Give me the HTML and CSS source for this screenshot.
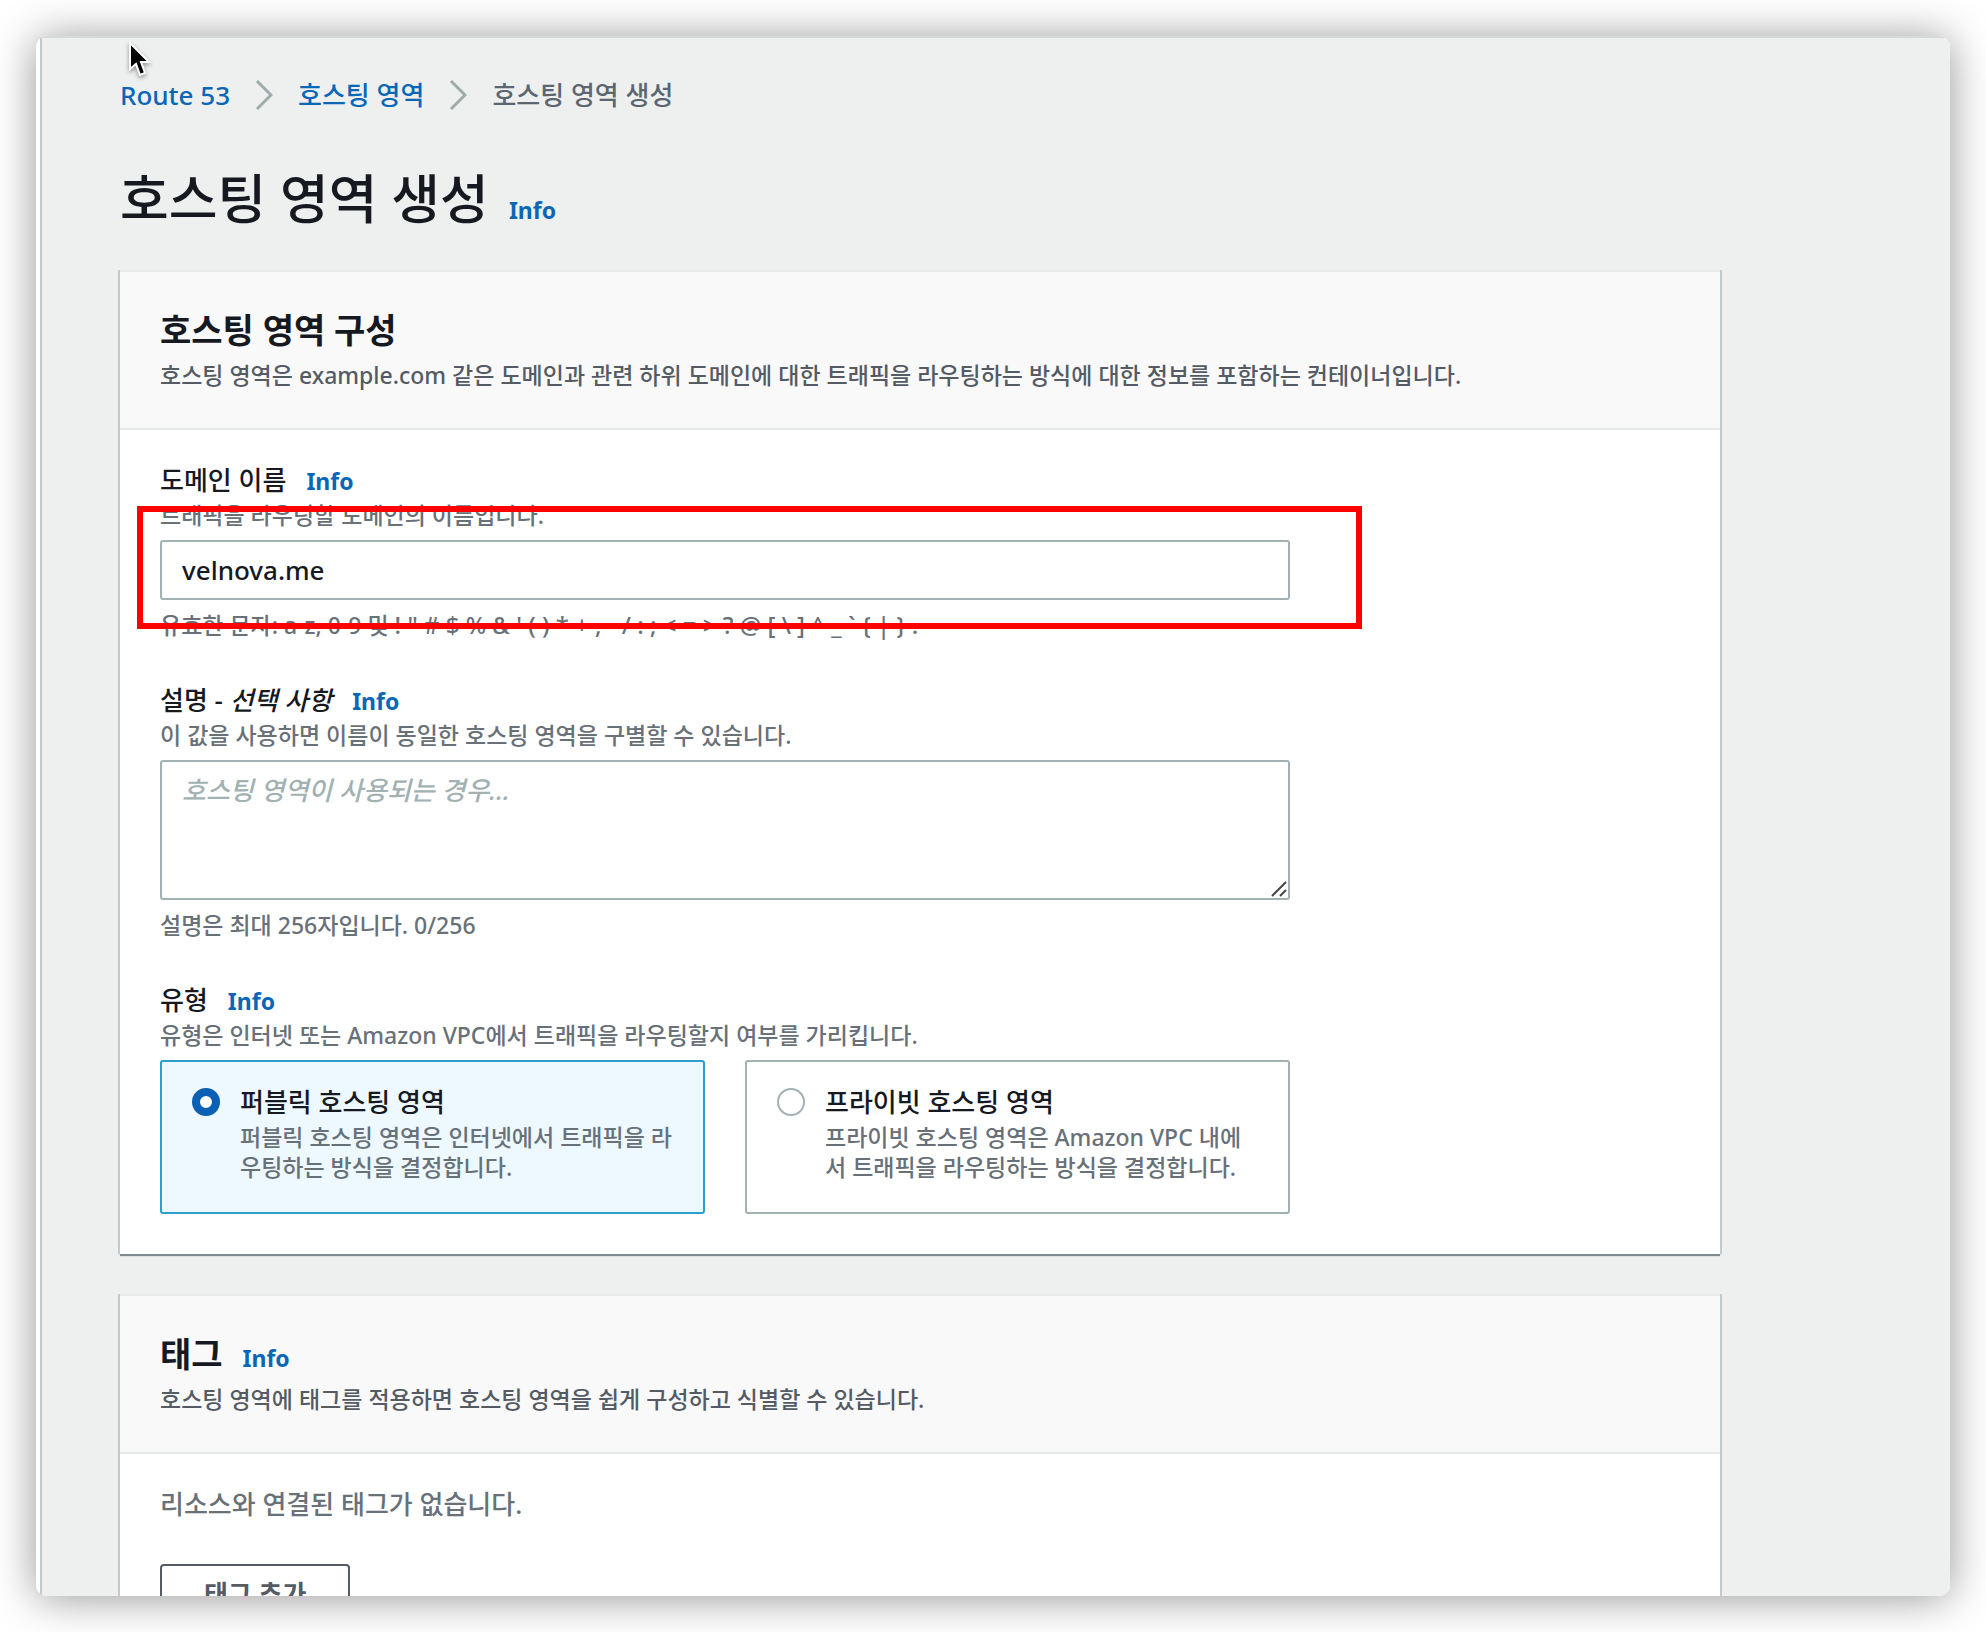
FILE: index.html
```
<!DOCTYPE html>
<html lang="ko">
<head>
  <meta charset="utf-8">
  <title>호스팅 영역 생성</title>
  <link rel="stylesheet" href="styles.css">
</head>
<body>
  <div class="window">
    <svg class="cursor" viewBox="0 0 24 38" aria-hidden="true">
      <path d="M2 2v26l6-5 4 11 5-2-4-11h8z" fill="#000" stroke="#fff" stroke-width="2"/>
    </svg>

    <main class="page">
      <nav class="breadcrumb">
        <a href="#">Route 53</a>
        <svg class="breadcrumb-arrow" viewBox="0 0 18 30" aria-hidden="true"><path d="M2 1l14 14L2 29"/></svg>
        <a href="#">호스팅 영역</a>
        <svg class="breadcrumb-arrow" viewBox="0 0 18 30" aria-hidden="true"><path d="M2 1l14 14L2 29"/></svg>
        <span>호스팅 영역 생성</span>
      </nav>

      <div class="page-header">
        <h1 class="page-title">호스팅 영역 생성</h1>
        <a href="#" class="info">Info</a>
      </div>

      <section class="card">
        <div class="card-header">
          <h2 class="card-title">호스팅 영역 구성</h2>
          <p class="card-description">호스팅 영역은 example.com 같은 도메인과 관련 하위 도메인에 대한 트래픽을 라우팅하는 방식에 대한 정보를 포함하는 컨테이너입니다.</p>
        </div>
        <form class="card-body form">
          <div class="field">
            <div class="field-header">
              <label class="label" for="domainName">도메인 이름</label>
              <a href="#" class="info">Info</a>
            </div>
            <p class="hint">트래픽을 라우팅할 도메인의 이름입니다.</p>
            <input type="text" id="domainName" class="input" value="velnova.me">
            <p class="hint hint-below">유효한 문자: a-z, 0-9 및 <span class="symbols">! " # $ % &amp; ' ( ) * + , - / : ; &lt; = &gt; ? @ [ \ ] ^ _ ` { | } . ~</span></p>
            <div class="highlight"></div>
          </div>

          <div class="field">
            <div class="field-header">
              <label class="label" for="description">설명 - <em>선택 사항</em></label>
              <a href="#" class="info">Info</a>
            </div>
            <p class="hint">이 값을 사용하면 이름이 동일한 호스팅 영역을 구별할 수 있습니다.</p>
            <div class="textarea-wrap">
              <textarea id="description" class="textarea" placeholder="호스팅 영역이 사용되는 경우..."></textarea>
              <svg class="resizer" viewBox="0 0 16 16" aria-hidden="true"><path d="M1 15L15 1M9 15l6-6"/></svg>
            </div>
            <p class="hint hint-below">설명은 최대 256자입니다. 0/256</p>
          </div>

          <div class="field" role="radiogroup" aria-labelledby="typeLabel">
            <div class="field-header">
              <span class="label" id="typeLabel">유형</span>
              <a href="#" class="info">Info</a>
            </div>
            <p class="hint">유형은 인터넷 또는 Amazon VPC에서 트래픽을 라우팅할지 여부를 가리킵니다.</p>
            <div class="tiles">
              <label class="tile tile-selected" for="typePublic">
                <input type="radio" class="radio" id="typePublic" name="type" value="public" checked>
                <span class="tile-text">
                  <span class="label">퍼블릭 호스팅 영역</span>
                  <span class="hint">퍼블릭 호스팅 영역은 인터넷에서 트래픽을 라우팅하는 방식을 결정합니다.</span>
                </span>
              </label>
              <label class="tile" for="typePrivate">
                <input type="radio" class="radio" id="typePrivate" name="type" value="private">
                <span class="tile-text">
                  <span class="label">프라이빗 호스팅 영역</span>
                  <span class="hint">프라이빗 호스팅 영역은 Amazon VPC 내에서 트래픽을 라우팅하는 방식을 결정합니다.</span>
                </span>
              </label>
            </div>
          </div>
        </form>
      </section>

      <section class="card">
        <div class="card-header">
          <div class="field-header">
            <h2 class="card-title">태그</h2>
            <a href="#" class="info">Info</a>
          </div>
          <p class="card-description">호스팅 영역에 태그를 적용하면 호스팅 영역을 쉽게 구성하고 식별할 수 있습니다.</p>
        </div>
        <div class="card-body">
          <p class="empty">리소스와 연결된 태그가 없습니다.</p>
          <button type="button" class="button">태그 추가</button>
        </div>
      </section>
    </main>
  </div>
</body>
</html>
```
FILE: styles.css
```
* {
  box-sizing: border-box;
}

body {
  margin: 0;
  padding: 36px;
  background-color: #fff;
  color: #16191f;
  font-family: "Noto Sans", "Noto Sans CJK KR", sans-serif;
  font-size: 26px;
  font-weight: 500;
  line-height: 40px;
}

h1,
h2,
p {
  margin: 0;
}

a {
  color: #0a66b7;
  text-decoration: none;
}

/* Browser window */
.window {
  position: relative;
  height: calc(100vh - 72px);
  overflow: hidden;
  padding-left: 4px;
  background-color: #fff;
  border-radius: 11px;
  box-shadow: 0 2px 44px rgba(0, 0, 0, 0.42);
}

.cursor {
  position: absolute;
  left: 92px;
  top: 5px;
  width: 24px;
  height: 38px;
  filter: drop-shadow(0 2px 2px rgba(0, 0, 0, 0.4));
}

.page {
  min-height: 100%;
  padding: 39px 230px 40px 78px;
  background-color: #eef0ef;
  border-left: 2px solid #c3cacd;
  box-shadow: inset 0 2px 0 #d5dbdb;
}

/* Breadcrumb */
.breadcrumb {
  display: flex;
  align-items: center;
  gap: 25px;
  color: #5c6670;
}

.breadcrumb-arrow {
  width: 18px;
  height: 30px;
  fill: none;
  stroke: #9eabac;
  stroke-width: 3;
}

.page-header,
.field-header {
  display: flex;
  align-items: baseline;
  gap: 20px;
}

.page-header {
  height: 60px;
  margin: 54px 0 41px;
}

.page-title {
  font-size: 53px;
  font-weight: 500;
  line-height: 60px;
}

.info {
  font-size: 23px;
  font-weight: 700;
  line-height: 30px;
}

/* Cards */
.card {
  margin-bottom: 40px;
  background-color: #fff;
  border-top: 2px solid #e6eaea;
  box-shadow: -2px 0 0 #c3cacd, 2px 0 0 #c3cacd, 0 2px 1px #7f8c8d;
}

.card-header {
  padding: 38px 40px;
  background-color: #f9f9f9;
  border-bottom: 2px solid #e6eaea;
}

.card-title {
  font-size: 34px;
  font-weight: 700;
  line-height: 40px;
}

.card-description {
  margin-top: 10px;
  color: #545b64;
  font-size: 23px;
  line-height: 30px;
}

.card-body {
  padding: 30px 40px 40px;
}

/* Form */
.form {
  display: flex;
  flex-direction: column;
  gap: 40px;
}

.field {
  position: relative;
  width: calc(75% - 10px);
}

.field-header {
  height: 40px;
}

.hint {
  color: #687078;
  font-size: 23px;
  line-height: 30px;
}

.hint-below {
  margin-top: 10px;
}

.symbols {
  font-size: 24px;
  line-height: 1;
}

.input,
.textarea {
  display: block;
  width: 100%;
  margin: 10px 0 0;
  padding: 8px 20px;
  background-color: #fff;
  color: #16191f;
  border: 2px solid #a2b1b2;
  border-radius: 3px;
  font: inherit;
}

.input {
  height: 60px;
}

.textarea {
  height: 140px;
  resize: none;
}

.textarea::placeholder {
  color: #a2b1b2;
  font-style: italic;
}

.textarea-wrap {
  position: relative;
}

.resizer {
  position: absolute;
  right: 3px;
  bottom: 3px;
  width: 16px;
  height: 16px;
  fill: none;
  stroke: #444;
  stroke-width: 2;
  pointer-events: none;
}

/* Red frame drawn over the domain name input */
.highlight {
  position: absolute;
  top: 46px;
  right: -72px;
  bottom: 11px;
  left: -23px;
  border: 6px solid #ff0000;
  pointer-events: none;
}

/* Radio tiles */
.tiles {
  display: flex;
  gap: 40px;
  margin-top: 10px;
}

.tile {
  display: flex;
  flex: 1;
  align-items: flex-start;
  gap: 20px;
  padding: 20px 28px 30px 30px;
  border: 2px solid #a2b1b2;
  border-radius: 3px;
}

.tile-selected {
  background-color: #edf8ff;
  border-color: #2ba0cf;
}

.tile-text {
  display: flex;
  flex: 1;
  flex-direction: column;
}

.radio {
  appearance: none;
  width: 28px;
  height: 28px;
  margin: 6px 0 0;
  background-color: #fff;
  border: 2px solid #a2b1b2;
  border-radius: 50%;
}

.radio:checked {
  border: 8px solid #0a60b5;
}

.empty {
  margin-bottom: 40px;
  color: #687078;
}

.button {
  height: 60px;
  padding: 0 42px;
  background-color: #fff;
  color: #545b64;
  border: 2px solid #545b64;
  border-radius: 4px;
  font: inherit;
  font-weight: 700;
}
```
